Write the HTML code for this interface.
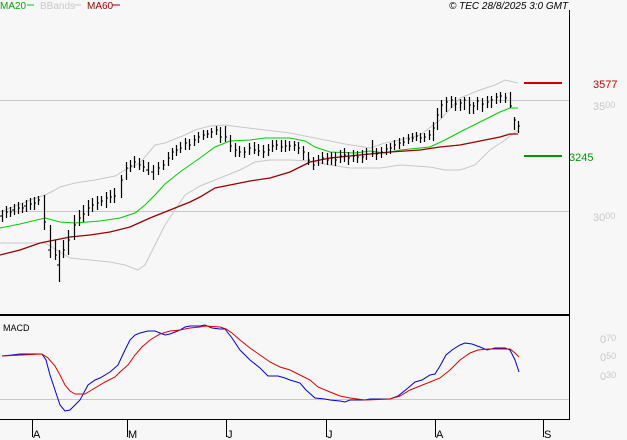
<!DOCTYPE html>
<html><head><meta charset="utf-8"><style>
html,body{margin:0;padding:0;background:#f7f7f7;}
svg{display:block;font-family:"Liberation Sans",sans-serif;}
</style></head><body>
<svg width="627" height="440" viewBox="0 0 627 440" xmlns="http://www.w3.org/2000/svg">
<rect width="627" height="440" fill="#f7f7f7"/>
<g font-size="10">
<text x="0" y="9" fill="#00aa00">MA20</text><line x1="27" y1="5" x2="34" y2="5" stroke="#00cc00"/>
<text x="40" y="9" fill="#c8c8c8">BBands</text><line x1="74" y1="5" x2="81" y2="5" stroke="#c8c8c8"/>
<text x="87" y="9" fill="#990000">MA60</text><line x1="112" y1="5" x2="120" y2="5" stroke="#990000"/>
<text x="449" y="9" fill="#000" font-style="italic">© TEC 28/8/2025 3:0 GMT</text>
</g>
<line x1="0" y1="100.5" x2="569" y2="100.5" stroke="#c8c8c8"/>
<line x1="0" y1="211.5" x2="569" y2="211.5" stroke="#c8c8c8"/>
<line x1="0" y1="399.5" x2="569" y2="399.5" stroke="#c8c8c8"/>
<polyline fill="none" stroke="#c8c8c8" points="0,212 30,200 45,195 55,190 60,187 75,183 95,180 115,176 125,170 140,163 155,145 165,143 185,135 195,130 210,126 225,125 240,127 265,130 290,133 310,137 325,140 345,144 370,148 385,143 400,140 420,135 440,120 460,98 480,90 495,85 505,80 518,83"/>
<polyline fill="none" stroke="#c8c8c8" points="0,243 20,243 45,243 60,252 70,258 90,260 110,262 125,265 138,270 145,265 155,245 165,225 175,210 185,195 200,186 215,180 240,170 255,162 270,160 290,160 310,161 330,165 350,168 380,168 400,165 430,167 445,170 460,170 475,165 490,150 505,140 518,130"/>
<polyline fill="none" stroke="#00cc00" points="0,228 20,224 45,218 60,222 75,223 100,221 120,218 135,213 145,205 155,195 165,184 180,172 200,158 215,147 230,141 250,140 265,138 290,138 305,141 315,147 330,152 355,153 370,151 385,153 400,150 430,147 445,140 460,132 480,122 500,112 510,108 518,108"/>
<polyline fill="none" stroke="#990000" stroke-width="1.3" points="0,255 20,250 40,243 55,240 70,237 90,235 110,232 130,227 150,218 170,210 190,202 200,197 215,188 230,185 250,181 270,178 290,172 300,167 310,162 330,158 350,156 370,154 390,152 420,150 440,147 460,145 480,141 500,137 510,134 518,134"/>
<path stroke="#000" stroke-width="1.2" fill="none" d="
M2.5,210V222M6.5,206V218M10.5,207V217M14.5,204V215M18.5,202V214M22.5,203V213M26.5,200V212M30.5,198V210M34.5,197V210M38.5,196V205M44.5,195V230M50.5,225V258M55.5,240V260M59.5,250V282M63.5,240V258M68.5,230V255M74.5,215V240M79.5,210V226M83.5,205V222M88.5,200V216M92.5,198V212M97.5,196V210M101.5,196V206M106.5,192V208M110.5,190V203M114.5,188V203M121.5,175V198M126.5,162V180M130.5,160V172M134.5,156V168M139.5,158V170M143.5,160V172M148.5,162V175M153.5,165V180M158.5,162V175M163.5,160V170M168.5,152V166M172.5,148V160M176.5,145V156M180.5,142V153M185.5,138V150M189.5,139V150M194.5,135V146M198.5,132V143M203.5,130V140M207.5,130V138M211.5,128V138M216.5,126V135M220.5,127V143M225.5,126V142M230.5,135V152M235.5,143V157M239.5,146V157M244.5,147V158M249.5,143V155M254.5,142V154M258.5,144V156M263.5,145V158M268.5,144V156M272.5,140V152M276.5,140V150M281.5,140V152M285.5,140V152M289.5,141V151M294.5,141V151M298.5,142V154M303.5,146V160M308.5,152V165M313.5,157V170M318.5,155V166M322.5,152V164M327.5,153V165M331.5,152V165M335.5,152V166M340.5,150V163M344.5,148V162M348.5,152V165M353.5,150V162M357.5,151V163M362.5,150V163M366.5,148V160M372.5,140V157M376.5,148V160M381.5,147V158M386.5,144V155M390.5,143V154M394.5,140V150M399.5,138V149M403.5,137V146M408.5,134V144M412.5,133V142M416.5,132V141M420.5,133V143M424.5,133V142M429.5,130V140M433.5,122V141M437.5,108V130M441.5,100V118M446.5,97V112M451.5,96V108M455.5,97V111M460.5,99V111M464.5,97V110M469.5,97V114M473.5,102V114M477.5,97V110M482.5,98V112M487.5,96V108M491.5,96V108M496.5,93V104M500.5,92V103M505.5,93V103M510.5,92V108M514.5,117V130M518.5,121V133"/>
<path stroke="#000" stroke-width="1" d="M2,216h-2M6,212h2M10,212h2M14,210h-2M18,208h2M22,208h2M26,206h-2M30,204h2M34,203h2M38,200h2M44,222h2M50,250h-2M55,255h2M59,265h-2M63,250h2M68,240h2M74,225h2M79,218h2M83,214h2M88,208h2M92,205h2M97,203h2M101,201h2M106,198h2M110,197h2M114,196h2M121,180h2M126,168h2M130,166h2M134,162h2M139,165h2M143,167h2M148,170h-2M153,172h-2M158,168h2M163,165h2M168,158h2M172,152h2M176,150h2M180,148h2M185,143h2M189,145h2M194,140h2M198,137h2M203,135h2M207,134h2M211,132h2M216,130h2M220,137h2M225,137h2M230,146h2M235,150h2M239,152h2M244,152h2M249,148h2M254,150h2M258,151h2M263,152h2M268,150h2M272,146h2M276,145h2M281,147h2M285,146h2M289,146h2M294,145h2M298,148h2M303,152h2M308,160h2M313,165h2M318,160h2M322,158h2M327,160h2M331,158h2M335,160h2M340,156h2M344,155h2M348,158h2M353,156h2M357,157h2M362,157h2M366,154h2M372,152h2M376,154h2M381,152h2M386,149h2M390,148h2M394,145h2M399,143h2M403,142h2M408,139h2M412,138h2M416,136h2M420,138h2M424,137h2M429,135h2M433,128h2M437,115h2M441,105h2M446,102h2M451,100h2M455,104h2M460,103h2M464,100h2M469,105h2M473,106h2M477,101h2M482,104h2M487,102h2M491,100h2M496,97h2M500,96h2M505,98h2M510,106h2M514,120h2M518,126h2"/>
<line x1="524" y1="83" x2="562" y2="83" stroke="#cc0000" stroke-width="2"/>
<line x1="524" y1="156" x2="562" y2="156" stroke="#009900" stroke-width="2"/>
<g font-size="11">
<text x="593" y="88" fill="#cc0000">3577</text>
<text x="593" y="110" fill="#c8c8c8">35<tspan font-size="9" dy="-2">00</tspan></text>
<text x="569" y="161" fill="#009900">3245</text>
<text x="593" y="221" fill="#c8c8c8">30<tspan font-size="9" dy="-2">00</tspan></text>
<text x="600" y="343" fill="#c8c8c8">0<tspan font-size="9" dy="-2">70</tspan></text>
<text x="600" y="361" fill="#c8c8c8">0<tspan font-size="9" dy="-2">50</tspan></text>
<text x="600" y="380" fill="#c8c8c8">0<tspan font-size="9" dy="-2">30</tspan></text>
</g>
<line x1="0" y1="315" x2="569" y2="315" stroke="#000" stroke-width="2"/>
<line x1="569.5" y1="10" x2="569.5" y2="419" stroke="#000"/>
<line x1="0" y1="419.5" x2="570" y2="419.5" stroke="#000"/>
<text x="3" y="331" font-size="9" fill="#000">MACD</text>
<polyline fill="none" stroke="#0000dd" points="2,356 12,355 20,354 28,354 42,354 46,360 50,375 55,390 60,405 65,411 70,410 80,400 88,385 95,380 100,378 110,372 118,365 125,350 130,340 135,335 140,333 148,331 155,331 160,333 165,335 170,334 175,332 180,330 185,327 190,326 200,326 205,325 212,328 220,329 225,329 232,338 240,350 250,360 260,368 268,376 278,376 285,378 290,380 300,383 306,390 315,398 325,399 330,400 340,401 345,402 350,400 365,400 370,399 390,399 398,396 408,388 415,382 422,380 430,375 435,374 440,366 446,355 452,350 460,345 465,343 472,344 480,347 487,350 495,348 505,348 510,350 515,360 519,372"/>
<polyline fill="none" stroke="#dd0000" points="2,356 42,354 48,358 55,366 60,375 65,385 70,391 75,394 85,394 95,388 105,382 115,377 120,372 128,365 135,355 142,347 150,340 160,334 170,331 180,330 190,328 200,327 205,326 220,327 226,329 232,333 240,340 250,348 260,355 270,362 280,367 290,370 300,375 310,380 318,387 330,392 340,396 350,398 365,400 390,399 400,396 410,390 420,386 430,382 440,378 450,370 460,360 470,353 478,350 488,349 500,349 510,349 515,353 519,357"/>
<path stroke="#000" d="M32.5,419V437M127.5,419V437M226.5,419V437M326.5,419V437M435.5,419V437M543.5,419V437"/>
<g font-size="11" fill="#000">
<text x="33" y="438">A</text><text x="128" y="438">M</text><text x="227" y="438">J</text><text x="327" y="438">J</text><text x="436" y="438">A</text><text x="544" y="438">S</text>
</g>
</svg>
</body></html>
